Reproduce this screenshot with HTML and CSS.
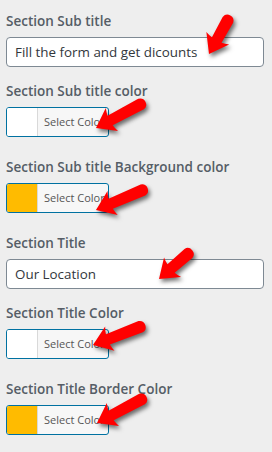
FILE: index.html
```html
<!DOCTYPE html>
<html lang="en">
<head>
  <meta charset="UTF-8" />
  <title>Section settings</title>
  <link rel="stylesheet" href="styles.css">
</head>
<body>
  <div class="panel">
    <div class="field">
      <label class="field-label">Section Sub title</label>
      <input class="text-input" type="text" value="Fill the form and get dicounts" />
    </div>

    <div class="field color-field">
      <label class="field-label">Section Sub title color</label>
      <button class="color-result"><span class="swatch"></span><span class="color-text">Select Color</span></button>
    </div>

    <div class="field color-field">
      <label class="field-label">Section Sub title Background color</label>
      <button class="color-result"><span class="swatch swatch-yellow"></span><span class="color-text">Select Color</span></button>
    </div>

    <div class="field">
      <label class="field-label">Section Title</label>
      <input class="text-input" type="text" value="Our Location" />
    </div>

    <div class="field color-field">
      <label class="field-label">Section Title Color</label>
      <button class="color-result"><span class="swatch"></span><span class="color-text">Select Color</span></button>
    </div>

    <div class="field color-field">
      <label class="field-label">Section Title Border Color</label>
      <button class="color-result"><span class="swatch swatch-yellow"></span><span class="color-text">Select Color</span></button>
    </div>
  </div>

  <!-- red pointer arrows drawn over the form -->
  <svg class="arrows" viewBox="0 0 272 452">
    <defs>
      <path id="arrowLong" d="M0 0 L18 -13 Q16.5 -9 16 -5.5 L51 -6 Q56 -5 56 0 Q56 5 51 6 L16 5.5 Q16.5 9 18 13 Z" />
      <path id="arrowShort" d="M0 0 L18 -13 Q16.5 -9 16 -5.5 L39 -6 Q44 -5 44 0 Q44 5 39 6 L16 5.5 Q16.5 9 18 13 Z" />
    </defs>
    <use href="#arrowShort" transform="translate(209 54) rotate(-61)" />
    <use href="#arrowLong" transform="translate(96 128) rotate(-28)" />
    <use href="#arrowLong" transform="translate(96 210) rotate(-23)" />
    <use href="#arrowShort" transform="translate(159 279) rotate(-41)" />
    <use href="#arrowLong" transform="translate(93 345) rotate(-21)" />
    <use href="#arrowLong" transform="translate(97 423) rotate(-28)" />
  </svg>
</body>
</html>
```
FILE: styles.css
```css
body {
  margin: 0;
  background: #eeeeee;
  font-family: "Open Sans", "Noto Sans", sans-serif;
  position: relative;
  height: 452px;
  overflow: hidden;
}

.panel {
  padding: 11px 8px 0 6px;
}

.field {
  display: flex;
  flex-direction: column;
  align-items: flex-start;
  margin-bottom: 14px;
}

.color-field {
  margin-bottom: 20px;
}

.field-label {
  display: block;
  font-size: 13.5px;
  font-weight: 600;
  line-height: 20px;
  color: #555d66;
  margin-bottom: 6px;
}

.text-input {
  box-sizing: border-box;
  width: 258px;
  height: 30px;
  margin: 0;
  padding: 0 8px;
  border: 1px solid #7e8993;
  border-radius: 4px;
  background: #fff;
  font-family: inherit;
  font-size: 13.4px;
  color: #32373c;
}

.color-result {
  box-sizing: border-box;
  display: flex;
  width: 103px;
  height: 30px;
  margin: 0;
  padding: 0;
  border: 1px solid #0071a1;
  border-radius: 3px;
  background: #f7f7f7;
  overflow: hidden;
  font-family: inherit;
}

.swatch {
  width: 30px;
  height: 100%;
  background: #fff;
  border-right: 1px solid #d9d9d9;
}

.swatch-yellow {
  background: #ffbb00;
}

.color-text {
  flex: 1;
  line-height: 28px;
  font-size: 11px;
  color: #555;
  text-align: left;
  padding-left: 6px;
  white-space: nowrap;
}

.arrows {
  position: absolute;
  left: 0;
  top: 0;
  width: 272px;
  height: 452px;
  fill: #ff0000;
  filter: drop-shadow(2px 3px 2px rgba(0, 0, 0, 0.55));
  pointer-events: none;
}
```
